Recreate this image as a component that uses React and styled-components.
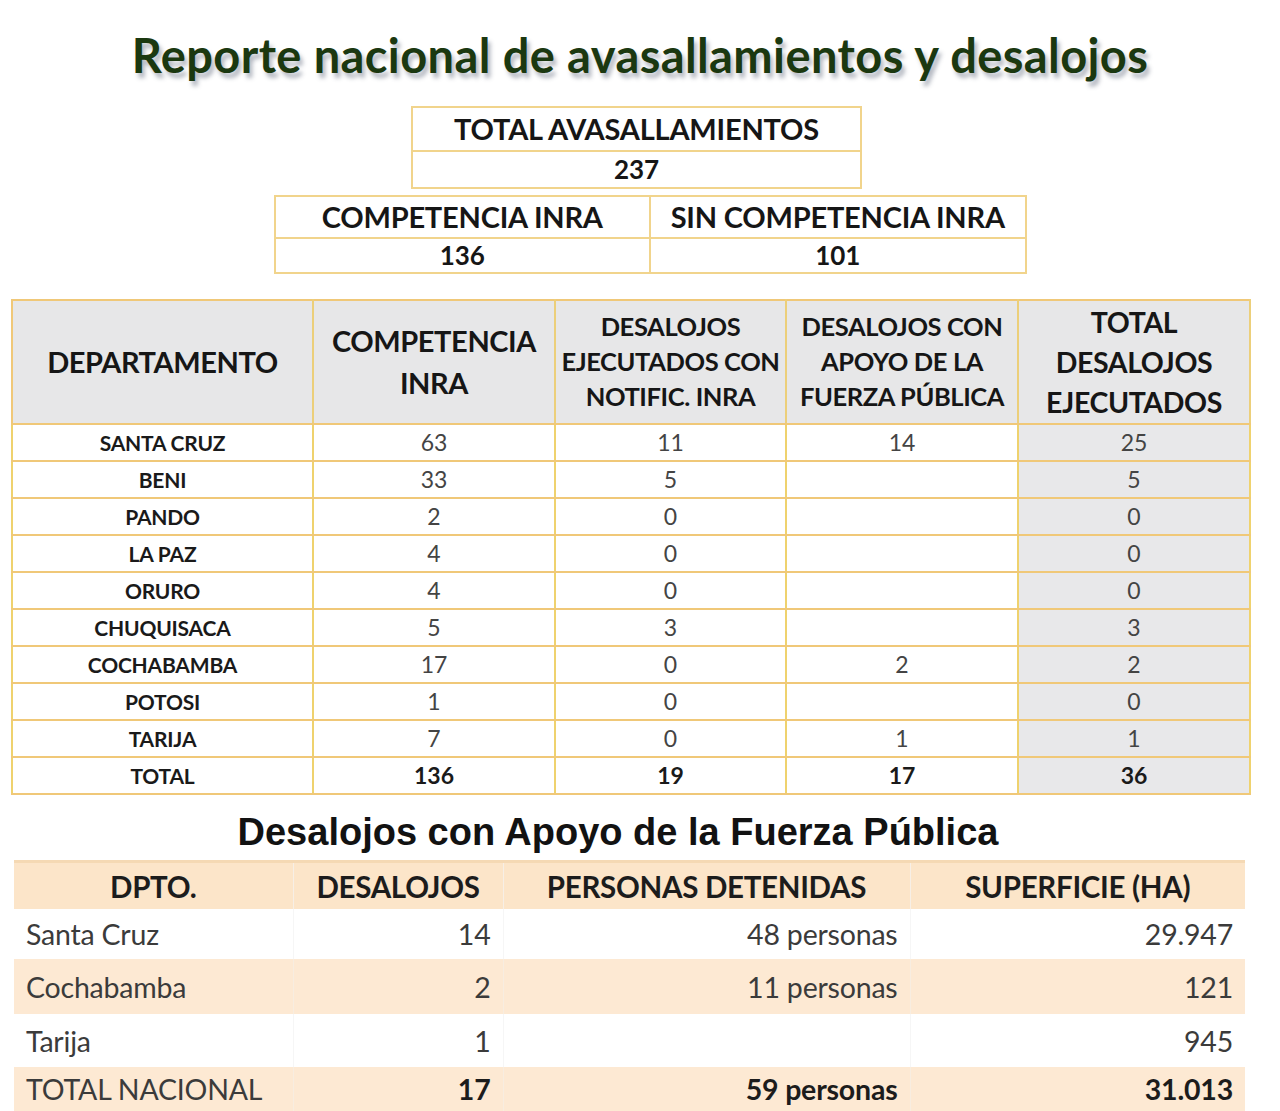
import React from "react";
import styled, { createGlobalStyle } from "styled-components";

const GlobalStyle = createGlobalStyle`
  html, body {
    margin: 0;
    padding: 0;
    background: #ffffff;
  }
  body {
    font-family: "Lato", "Open Sans", sans-serif;
    color: #111;
  }
`;

const Page = styled.div`
  width: 1280px;
  height: 1111px;
  overflow: hidden;
  display: flex;
  flex-direction: column;
  align-items: center;
  box-sizing: border-box;
  padding-top: 29px;
`;

const Title = styled.h1`
  margin: 0;
  height: 79px;
  font-family: "Lato", sans-serif;
  font-weight: 700;
  font-size: 47px;
  line-height: 52px;
  letter-spacing: 0.4px;
  color: #1b3810;
  text-shadow: 3px 5px 4px rgba(90, 100, 120, 0.45);
  white-space: nowrap;
`;

const Summary = styled.table`
  border-collapse: collapse;
  width: ${(p) => p.$width}px;
  margin-top: ${(p) => p.$top || 0}px;
  table-layout: fixed;
  margin-left: ${(p) => p.$shift || 0}px;

  td {
    border: 2px solid #f1d48c;
    text-align: center;
    font-weight: 700;
    color: #161616;
    padding: 0;
  }
`;

const SummaryHead = styled.td`
  height: ${(p) => p.$h}px;
  font-size: 29px;
  letter-spacing: -0.2px;
`;

const SummaryValue = styled.td`
  height: ${(p) => p.$h}px;
  font-size: 26px;
`;

const Report = styled.table`
  border-collapse: collapse;
  table-layout: fixed;
  width: 1238px;
  margin-top: 25px;
  margin-left: -18px;
  border: 2px solid #f0c878;
`;

const HeadCell = styled.th`
  background: #e7e7e8;
  border: 2px solid #f0c878;
  border-right-color: #eccf7a;
  height: 122px;
  padding: 0;
  font-weight: 700;
  font-size: ${(p) => p.$size || 25}px;
  line-height: ${(p) => p.$lh || 35}px;
  letter-spacing: -0.4px;
  color: #161616;
  text-align: center;
  white-space: nowrap;
`;

const BodyCell = styled.td`
  border: 2px solid #f0c878;
  border-left-color: #efd26e;
  border-right-color: #efd26e;
  height: 35px;
  padding: 0;
  text-align: center;
  background: ${(p) => (p.$shade ? "#e8e8ea" : "#ffffff")};
  font-weight: ${(p) => (p.$bold ? 700 : 400)};
  font-size: ${(p) => (p.$name ? 21 : 23)}px;
  letter-spacing: ${(p) => (p.$name ? "-0.2px" : "0")};
  color: ${(p) => (p.$bold ? "#1a1a1a" : "#444")};
`;

const SubTitle = styled.h2`
  margin: 15px 0 0;
  height: 52px;
  font-family: "Liberation Sans", Arial, sans-serif;
  font-weight: 700;
  font-size: 38px;
  line-height: 44px;
  color: #121212;
  transform: translateX(-22px);
  white-space: nowrap;
`;

const Support = styled.table`
  border-collapse: collapse;
  table-layout: fixed;
  width: 1231px;
  margin-left: -21px;
  border-top: 3px solid #f5d9b4;
`;

const SupportHead = styled.th`
  background: #fce5c9;
  height: 46px;
  padding: 0;
  font-weight: 700;
  font-size: 29.5px;
  letter-spacing: -0.3px;
  color: #1c1c1c;
  text-align: center;
  border-left: 1px solid #f7efe6;
  white-space: nowrap;
  &:first-child {
    border-left: none;
  }
`;

const SupportCell = styled.td`
  background: ${(p) => (p.$tint ? "#fde9d3" : "#ffffff")};
  height: ${(p) => p.$h}px;
  padding: 0 ${(p) => (p.$left ? 0 : 12)}px 0 ${(p) => (p.$left ? 12 : 0)}px;
  text-align: ${(p) => (p.$left ? "left" : "right")};
  font-weight: ${(p) => (p.$bold ? 700 : 400)};
  font-size: 28.5px;
  letter-spacing: -0.2px;
  color: ${(p) => (p.$bold ? "#1c1c1c" : "#3b3b3b")};
  border-left: 1px solid ${(p) => (p.$tint ? "#f8ede0" : "#f6f6f6")};
  white-space: nowrap;
  &:first-child {
    border-left: none;
  }
`;

const departments = [
  ["SANTA CRUZ", "63", "11", "14", "25"],
  ["BENI", "33", "5", "", "5"],
  ["PANDO", "2", "0", "", "0"],
  ["LA PAZ", "4", "0", "", "0"],
  ["ORURO", "4", "0", "", "0"],
  ["CHUQUISACA", "5", "3", "", "3"],
  ["COCHABAMBA", "17", "0", "2", "2"],
  ["POTOSI", "1", "0", "", "0"],
  ["TARIJA", "7", "0", "1", "1"],
];

const support = [
  { dpto: "Santa Cruz", des: "14", per: "48 personas", sup: "29.947", h: 50 },
  { dpto: "Cochabamba", des: "2", per: "11 personas", sup: "121", h: 55, tint: true },
  { dpto: "Tarija", des: "1", per: "", sup: "945", h: 53 },
  { dpto: "TOTAL NACIONAL", des: "17", per: "59 personas", sup: "31.013", h: 44, tint: true, total: true },
];

export default function App() {
  return (
    <>
      <GlobalStyle />
      <Page>
        <Title>Reporte nacional de avasallamientos y desalojos</Title>

        <Summary $width={451} $shift={-7}>
          <tbody>
            <tr>
              <SummaryHead $h={42}>TOTAL AVASALLAMIENTOS</SummaryHead>
            </tr>
            <tr>
              <SummaryValue $h={35}>237</SummaryValue>
            </tr>
          </tbody>
        </Summary>

        <Summary $width={753} $top={6} $shift={20}>
          <tbody>
            <tr>
              <SummaryHead $h={40}>COMPETENCIA INRA</SummaryHead>
              <SummaryHead $h={40}>SIN COMPETENCIA INRA</SummaryHead>
            </tr>
            <tr>
              <SummaryValue $h={33}>136</SummaryValue>
              <SummaryValue $h={33}>101</SummaryValue>
            </tr>
          </tbody>
        </Summary>

        <Report>
          <colgroup>
            <col style={{ width: 301 }} />
            <col style={{ width: 242 }} />
            <col style={{ width: 231 }} />
            <col style={{ width: 232 }} />
            <col style={{ width: 232 }} />
          </colgroup>
          <thead>
            <tr>
              <HeadCell $size={29}>DEPARTAMENTO</HeadCell>
              <HeadCell $size={29} $lh={42}>
                COMPETENCIA
                <br />
                INRA
              </HeadCell>
              <HeadCell $size={25.5}>
                DESALOJOS
                <br />
                EJECUTADOS CON
                <br />
                NOTIFIC. INRA
              </HeadCell>
              <HeadCell $size={25.5}>
                DESALOJOS CON
                <br />
                APOYO DE LA
                <br />
                FUERZA PÚBLICA
              </HeadCell>
              <HeadCell $size={28.5} $lh={40}>
                TOTAL
                <br />
                DESALOJOS
                <br />
                EJECUTADOS
              </HeadCell>
            </tr>
          </thead>
          <tbody>
            {departments.map(([name, comp, notif, fuerza, total]) => (
              <tr key={name}>
                <BodyCell $bold $name>
                  {name}
                </BodyCell>
                <BodyCell>{comp}</BodyCell>
                <BodyCell>{notif}</BodyCell>
                <BodyCell>{fuerza}</BodyCell>
                <BodyCell $shade>{total}</BodyCell>
              </tr>
            ))}
            <tr>
              <BodyCell $bold $name>
                TOTAL
              </BodyCell>
              <BodyCell $bold>136</BodyCell>
              <BodyCell $bold>19</BodyCell>
              <BodyCell $bold>17</BodyCell>
              <BodyCell $bold $shade>
                36
              </BodyCell>
            </tr>
          </tbody>
        </Report>

        <SubTitle>Desalojos con Apoyo de la Fuerza Pública</SubTitle>

        <Support>
          <colgroup>
            <col style={{ width: 279 }} />
            <col style={{ width: 210 }} />
            <col style={{ width: 407 }} />
            <col style={{ width: 335 }} />
          </colgroup>
          <thead>
            <tr>
              <SupportHead>DPTO.</SupportHead>
              <SupportHead>DESALOJOS</SupportHead>
              <SupportHead>PERSONAS DETENIDAS</SupportHead>
              <SupportHead>SUPERFICIE (HA)</SupportHead>
            </tr>
          </thead>
          <tbody>
            {support.map((r) => (
              <tr key={r.dpto}>
                <SupportCell $left $h={r.h} $tint={r.tint}>
                  {r.dpto}
                </SupportCell>
                <SupportCell $h={r.h} $tint={r.tint} $bold={r.total}>
                  {r.des}
                </SupportCell>
                <SupportCell $h={r.h} $tint={r.tint} $bold={r.total}>
                  {r.per}
                </SupportCell>
                <SupportCell $h={r.h} $tint={r.tint} $bold={r.total}>
                  {r.sup}
                </SupportCell>
              </tr>
            ))}
          </tbody>
        </Support>
      </Page>
    </>
  );
}
